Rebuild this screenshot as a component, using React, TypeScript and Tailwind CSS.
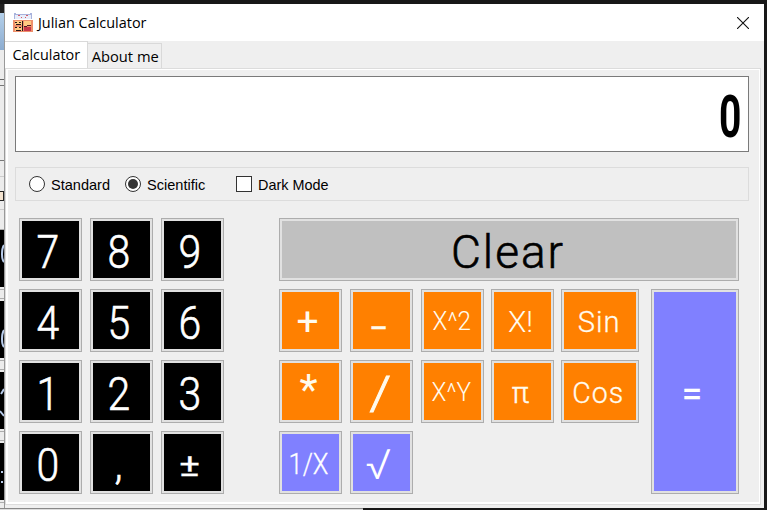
import React from "react";

const tones = {
  black: "bg-black text-white",
  orange: "bg-[#ff8000] text-[#fffbee]",
  violet: "bg-[#8080ff] text-white",
  silver: "bg-[#c0c0c0] text-black",
};

type KeyProps = {
  label: string;
  tone: keyof typeof tones;
  glyph: string;
  size?: string;
};

function Key({ label, tone, glyph, size = "h-[63px] w-[63px]" }: KeyProps) {
  return (
    <button className={`flex shrink-0 border border-[#adadad] bg-[#e1e1e1] p-[2px] ${size}`}>
      <span className={`flex h-full w-full items-center justify-center overflow-hidden ${tones[tone]}`}>
        <span className={`block whitespace-nowrap leading-none ${glyph}`}>{label}</span>
      </span>
    </button>
  );
}

const digit = "text-[46px] [-webkit-text-stroke:0.6px] scale-x-[0.89] translate-x-[-3px] translate-y-[2px]";
const power = "text-[25px] scale-x-[0.97] translate-x-[-1px] translate-y-[1px]";
const digits = ["7", "8", "9", "4", "5", "6", "1", "2", "3", "0"];

function AppIcon() {
  return (
    <svg width="20" height="20" viewBox="0 0 20 20" className="block">
      <path d="M1 0h2v1h14V0h2v6h-1V3H2v3H1z" fill="#a9b3dc" />
      <path d="M2 2h16v4H2z" fill="#e8edf9" />
      <path d="M5 2h2v1H5zM13 2h2v1h-2zM8 4h1v1H8zM12 4h1v1h-1z" fill="#d65a64" />
      <path d="M0 7h20v12H0z" fill="#ee8f6c" />
      <path d="M2 8h7v4H2zM2 14h7v4H2zM11 8h7v5h-7z" fill="#ffca82" />
      <path d="M2 9h2v1H2zM6 9h2v1H6zM3 11h5v1H3zM2 14h2v1H2zM6 14h2v1H6zM3 17h5v1H3zM9 8h1v10H9z" fill="#28161a" />
      <path d="M11 14h7v4h-7z" fill="#c8384a" />
      <path d="M11 13h3v1h-3zM14 12h4v1h-4z" fill="#532027" />
    </svg>
  );
}

function Radio({ label, checked = false }: { label: string; checked?: boolean }) {
  return (
    <label className="flex items-center gap-[6px]">
      <span className="flex h-4 w-4 shrink-0 items-center justify-center rounded-full border border-[#333] bg-white">
        {checked && <span className="h-[10px] w-[10px] rounded-full bg-[#333]" />}
      </span>
      <span className="origin-left translate-y-[1px] scale-x-[0.97]">{label}</span>
    </label>
  );
}

function StripKey({ children }: { children?: React.ReactNode }) {
  return (
    <div className="flex h-[71px] shrink-0 flex-col">
      <div className="h-[57px] shrink-0 overflow-hidden bg-black">
        <svg width="4" height="57" className="block" fill="none" stroke="#b9cdec" strokeWidth="2">{children}</svg>
      </div>
      <div className="mt-[2px] h-[10px] border-y border-[#adadad]" />
    </div>
  );
}

/* Sliver of the window lying behind the calculator. */
function BackWindow() {
  return (
    <div className="flex w-[4px] shrink-0 flex-col overflow-hidden bg-[#ececec]">
      <div className="h-[9px] shrink-0 bg-[#222]" />
      <div className="h-[37px] shrink-0 bg-gradient-to-b from-[#b4d0ea] to-[#8cacd0]" />
      <div className="h-[30px] shrink-0 border-b border-[#666]" />
      <div className="h-[6px] shrink-0 border-b border-[#777]" />
      <div className="h-[75px] shrink-0 border-b border-[#777]" />
      <div className="h-[16px] shrink-0 border-b border-[#ccc]" />
      <div className="h-[15px] shrink-0 border-b border-[#222]" />
      <div className="h-[9px] shrink-0 border-r border-b border-[#222] bg-[#f4e3cf]" />
      <div className="h-[9px] shrink-0 border-b border-[#ccc]" />
      <div className="h-[20px] shrink-0 border-b border-[#adadad]" />
      <StripKey><path d="M4 15Q2 18 2 24T4 32" /></StripKey>
      <StripKey><path d="M4 29Q2 32 2 38T4 46" /></StripKey>
      <StripKey><path d="M1 22L4 17M0 39L4 44" /></StripKey>
      <StripKey><path d="M1 29h2M1 39h2" /></StripKey>
    </div>
  );
}

export default function App() {
  return (
    <div className="flex h-[510px] w-[767px] flex-col overflow-hidden bg-[#181818] pt-[4px] font-['Open_Sans','Noto_Sans',sans-serif] text-black">
      <div className="flex h-[504px] shrink-0">
        <BackWindow />
        <div className="flex w-[760px] flex-col border-l border-[#999] bg-[#efefef]">
          <header className="flex h-[37px] shrink-0 items-center bg-white pl-[8px]">
            <AppIcon />
            <h1 className="ml-[5px] w-[109px] text-[14px]">
              <span className="block origin-left scale-x-[1.03] whitespace-nowrap">Julian Calculator</span>
            </h1>
            <svg width="12" height="12" viewBox="0 0 12 12" className="mr-[15px] ml-auto">
              <path d="M0 0L12 12M12 0L0 12" stroke="#111" strokeWidth="1.1" />
            </svg>
          </header>

          <nav className="flex h-[27px] shrink-0 items-end text-[15px] leading-none">
            <div className="flex h-[27px] w-[83px] items-center justify-center border-t border-r border-[#d9d9d9] bg-white">
              <span className="scale-x-[0.96] translate-y-[-1px] whitespace-nowrap">Calculator</span>
            </div>
            <div className="flex h-[25px] w-[74px] items-center justify-center border-t border-r border-[#d9d9d9]">
              <span className="scale-x-[0.98] translate-x-[1px] whitespace-nowrap">About me</span>
            </div>
          </nav>

          <main className="mr-[3px] h-[437px] border border-[#dcdcdc] bg-white pt-[1px] pr-[1px] pb-[2px] pl-[2px]">
            <div className="flex h-full flex-col bg-[#efefef] pt-[6px] pl-[7px]">
              <div className="flex h-[76px] w-[734px] shrink-0 items-center justify-end border border-[#7a7a7a] bg-white pr-[7px] font-[Roboto,sans-serif]">
                <span className="origin-right translate-y-[3px] scale-x-[0.65] text-[60px] leading-none font-bold">0</span>
              </div>

              <div className="mt-[15px] flex h-[34px] w-[734px] shrink-0 items-center border border-[#dcdcdc] pl-[13px] font-['Liberation_Sans',Arial,sans-serif] text-[15px]">
                <div className="w-[96px]"><Radio label="Standard" /></div>
                <div className="w-[111px]"><Radio label="Scientific" checked /></div>
                <label className="flex items-center gap-[6px]">
                  <span className="h-4 w-4 border border-[#333] bg-white" />
                  <span className="origin-left translate-y-[1px] scale-x-[0.96]">Dark Mode</span>
                </label>
              </div>

              <div className="mt-[17px] ml-[4px] flex gap-[55px] font-[Roboto,sans-serif] font-light">
                <div className="grid w-[205px] shrink-0 grid-cols-3 gap-[8px]">
                  {digits.map((d) => (
                    <Key key={d} label={d} tone="black" glyph={digit} />
                  ))}
                  <Key label="," tone="black" glyph="text-[42px] [-webkit-text-stroke:0.6px] translate-x-[-3px] translate-y-[2px]" />
                  <Key label="±" tone="black" glyph="text-[39px] font-normal [-webkit-text-stroke:0.4px] translate-x-[-3px] translate-y-[3px] scale-y-[0.8]" />
                </div>

                <div className="flex w-[460px] shrink-0 flex-col gap-[8px]">
                  <Key label="Clear" tone="silver" size="h-[63px] w-[460px]" glyph="text-[46px] [-webkit-text-stroke:0.6px] tracking-[2px] translate-x-[-1px] translate-y-[2px]" />
                  <div className="flex justify-between">
                    <div className="flex flex-col gap-[8px]">
                      <div className="flex gap-[8px]">
                        <Key label="+" tone="orange" glyph="text-[39px] font-normal translate-x-[-3px] translate-y-[2px]" />
                        <Key label="−" tone="orange" glyph="text-[34px] font-normal [-webkit-text-stroke:0.4px] translate-x-[-3px] translate-y-[7px]" />
                        <Key label="X^2" tone="orange" glyph={power} />
                        <div className="-ml-px flex gap-[7px]">
                          <Key label="X!" tone="orange" glyph="text-[30px] translate-x-[-2px] translate-y-[1px]" />
                          <Key label="Sin" tone="orange" size="h-[63px] w-[78px]" glyph="text-[30px] tracking-[1px] [-webkit-text-stroke:0.3px] scale-x-[0.97] translate-x-[-1px] translate-y-[1px]" />
                        </div>
                      </div>
                      <div className="flex gap-[8px]">
                        <Key label="*" tone="orange" glyph="text-[42px] font-normal translate-x-[-2px] translate-y-[-2px]" />
                        <Key label="/" tone="orange" glyph="text-[46px] [-webkit-text-stroke:0.8px] scale-x-[1.2] translate-x-[-1px] translate-y-[1px]" />
                        <Key label="X^Y" tone="orange" glyph={power} />
                        <div className="-ml-px flex gap-[7px]">
                          <Key label="π" tone="orange" glyph="text-[29px] [-webkit-text-stroke:0.5px] translate-x-[-2px] translate-y-[2px]" />
                          <Key label="Cos" tone="orange" size="h-[63px] w-[78px]" glyph="text-[30px] tracking-[1px] [-webkit-text-stroke:0.3px] scale-x-[0.95] translate-x-[-2px] translate-y-[1px]" />
                        </div>
                      </div>
                      <div className="flex gap-[8px]">
                        <Key label="1/X" tone="violet" glyph="text-[30px] [-webkit-text-stroke:0.3px] scale-x-[0.85] translate-x-[-2px] translate-y-[1px]" />
                        <Key label="√" tone="violet" glyph="text-[42px] font-light translate-x-[-3px] translate-y-[2px] scale-x-[1.15]" />
                      </div>
                    </div>
                    <Key label="=" tone="violet" size="h-[205px] w-[88px]" glyph="text-[37px] font-normal [-webkit-text-stroke:0.4px] translate-x-[-3px] translate-y-[2px]" />
                  </div>
                </div>
              </div>
            </div>
          </main>
        </div>
      </div>
      <div className="h-[2px] w-[363px] shrink-0 border-t border-[#888] bg-[#ddd]" />
    </div>
  );
}
